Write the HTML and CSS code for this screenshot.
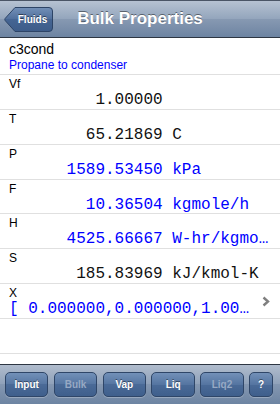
FILE: index.html
```html
<!DOCTYPE html>
<html lang="en">
<head>
    <meta charset="UTF-8">
    <meta name="viewport" content="width=device-width, initial-scale=1.0">
    <title>Bulk Properties</title>
    <link rel="stylesheet" href="styles.css">
</head>
<body>

    <div class="screen">
        <header class="navbar">
            <button class="back">
                <svg width="49" height="25" viewBox="0 0 49 25">
                    <defs>
                        <linearGradient id="backFill" x1="0" y1="0" x2="0" y2="1">
                            <stop offset="0" stop-color="#7390b8"/>
                            <stop offset="0.5" stop-color="#4f6e9b"/>
                            <stop offset="0.5" stop-color="#456593"/>
                            <stop offset="1" stop-color="#3d5c89"/>
                        </linearGradient>
                    </defs>
                    <path d="M11 0.5 H45 Q48.5 0.5 48.5 4 V21 Q48.5 24.5 45 24.5 H11 L1.2 13.6 Q0.4 12.5 1.2 11.4 Z"
                          fill="url(#backFill)" stroke="#2d4466" stroke-width="1"/>
                </svg>
                <span>Fluids</span>
            </button>
            <h1>Bulk Properties</h1>
        </header>

        <ul class="table">
            <li class="cell head">
                <div class="name">c3cond</div>
                <div class="desc">Propane to condenser</div>
            </li>
            <li class="cell">
                <div class="label">Vf</div>
                <div class="value">         1.00000</div>
            </li>
            <li class="cell">
                <div class="label">T</div>
                <div class="value">        65.21869 C</div>
            </li>
            <li class="cell">
                <div class="label">P</div>
                <div class="value blue">      1589.53450 kPa</div>
            </li>
            <li class="cell">
                <div class="label">F</div>
                <div class="value blue">        10.36504 kgmole/h</div>
            </li>
            <li class="cell">
                <div class="label">H</div>
                <div class="value blue">      4525.66667 W-hr/kgmole</div>
            </li>
            <li class="cell">
                <div class="label">S</div>
                <div class="value">       185.83969 kJ/kmol-K</div>
            </li>
            <li class="cell more">
                <div class="text">
                    <div class="label">X</div>
                    <div class="value blue">[ 0.000000,0.000000,1.000000 ]</div>
                </div>
                <svg class="chevron" width="8" height="11" viewBox="0 0 8 11">
                    <path d="M1.5 1.5 L6 5.5 L1.5 9.5" fill="none" stroke="#7f7f7f" stroke-width="2.4"/>
                </svg>
            </li>
            <li class="cell empty"></li>
        </ul>

        <footer class="toolbar">
            <button class="tb">Input</button>
            <button class="tb off">Bulk</button>
            <button class="tb">Vap</button>
            <button class="tb">Liq</button>
            <button class="tb off">Liq2</button>
            <button class="tb help">?</button>
        </footer>
    </div>

</body>
</html>
```

FILE: styles.css
```css
body {
    margin: 0;
    font-family: "Liberation Sans", Arial, sans-serif;
    background-color: #fff;
}

.screen {
    width: 280px;
    height: 404px;
    display: flex;
    flex-direction: column;
    overflow: hidden;
}

/* top navigation bar */
.navbar {
    height: 38px;
    box-sizing: border-box;
    display: grid;
    grid-template-columns: 1fr auto 1fr;
    align-items: center;
    padding: 0 4px;
    border-top: 1px solid #4a5566;
    border-bottom: 1px solid #2d3642;
    background: linear-gradient(#b6c2d2, #93a5bc 50%, #8799b2 50%, #6d84a2);
}

.navbar h1 {
    margin: 0;
    font-size: 17px;
    font-weight: bold;
    color: #fff;
    text-shadow: 0 -1px 0 rgba(0, 0, 0, 0.45);
}

.back {
    position: relative;
    justify-self: start;
    width: 49px;
    height: 25px;
    padding: 0 0 0 8px;
    border: none;
    background: none;
    color: #fff;
    font-family: "Liberation Sans", Arial, sans-serif;
    font-size: 10px;
    font-weight: bold;
    text-shadow: 0 -1px 0 rgba(0, 0, 0, 0.5);
}

.back svg {
    position: absolute;
    left: 0;
    top: 0;
}

.back span {
    position: relative;
}

/* table of properties */
.table {
    flex: 1;
    margin: 0;
    padding: 0;
    list-style: none;
}

.cell {
    height: 34.86px;
    box-sizing: border-box;
    padding: 1px 6px 0 9px;
    border-bottom: 1px solid #e0e0e0;
}

.cell.head {
    height: 37px;
    padding-top: 3px;
}

.name {
    font-size: 14px;
    line-height: 17px;
}

.desc {
    font-size: 12px;
    line-height: 15px;
    color: #0000ff;
}

.label {
    font-size: 12px;
    line-height: 16px;
    color: #000;
}

.value {
    font-family: "Liberation Mono", "Courier New", monospace;
    font-size: 16px;
    line-height: 17px;
    white-space: pre;
    overflow: hidden;
    text-overflow: ellipsis;
    color: #111;
}

.value.blue {
    color: #0000ff;
}

.cell.more {
    display: flex;
    align-items: center;
    gap: 8px;
    padding-right: 10px;
}

.cell.more .text {
    flex: 1;
    min-width: 0;
    align-self: flex-start;
}

.chevron {
    flex: none;
}

/* bottom toolbar */
.toolbar {
    height: 40px;
    box-sizing: border-box;
    display: flex;
    align-items: center;
    gap: 5.4px;
    padding: 0 7px 0 5px;
    border-top: 1px solid #2d3642;
    background: linear-gradient(#b0bccd, #8fa1b9 50%, #8497b1 50%, #6d84a2);
}

.tb {
    width: 43.5px;
    height: 25px;
    padding: 0;
    border: 1px solid #2f4668;
    border-radius: 5px;
    background: linear-gradient(#7290b8, #5575a1 50%, #4a6a97 50%, #3f5f8c);
    box-shadow: 0 1px 0 rgba(255, 255, 255, 0.25);
    color: #fff;
    font-family: "Liberation Sans", Arial, sans-serif;
    font-size: 10px;
    font-weight: bold;
    text-shadow: 0 -1px 0 rgba(0, 0, 0, 0.45);
}

.tb.off {
    color: #97a9c4;
    text-shadow: none;
}

.tb.help {
    width: 24px;
}
```
